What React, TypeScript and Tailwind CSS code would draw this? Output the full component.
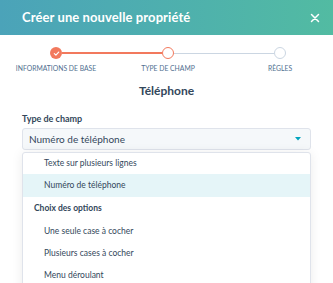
import React from "react";

const font = { fontFamily: "Lato, 'Noto Sans', sans-serif" };

type Step = {
  label: string;
  left: string;
  right: string;
  kind: "done" | "active" | "todo";
};

const steps: Step[] = [
  { label: "INFORMATIONS DE BASE", left: "bg-transparent", right: "bg-[#f2795d] h-[2px]", kind: "done" },
  { label: "TYPE DE CHAMP", left: "bg-[#f2795d] h-[2px]", right: "bg-[#cbd6e2] h-[1px]", kind: "active" },
  { label: "RÈGLES", left: "bg-[#cbd6e2] h-[1px]", right: "bg-transparent", kind: "todo" },
];

function Circle({ kind }: { kind: Step["kind"] }) {
  if (kind === "done")
    return (
      <div className="w-[12px] h-[12px] shrink-0 rounded-full bg-[#f2795d] flex items-center justify-center">
        <svg width="7" height="7" viewBox="0 0 8 8">
          <path d="M1.5 4.2 L3.3 5.8 L6.5 2.3" stroke="white" strokeWidth="1.3" fill="none" strokeLinecap="round" strokeLinejoin="round" />
        </svg>
      </div>
    );
  if (kind === "active")
    return <div className="w-[12px] h-[12px] shrink-0 rounded-full bg-white border-[1.5px] border-[#f2795d]" />;
  return <div className="w-[12px] h-[12px] shrink-0 rounded-full bg-white border border-[#cbd6e2]" />;
}

const items: { text: string; cls: string }[] = [
  { text: "Texte sur plusieurs lignes", cls: "h-[21px] pl-[21px]" },
  { text: "Numéro de téléphone", cls: "h-[23px] pl-[21px] bg-[#e5f5f8]" },
  { text: "Choix des options", cls: "h-[23px] pl-[11px] font-bold" },
  { text: "Une seule case à cocher", cls: "h-[22px] pl-[21px]" },
  { text: "Plusieurs cases à cocher", cls: "h-[22px] pl-[21px]" },
  { text: "Menu déroulant", cls: "h-[22px] pl-[21px]" },
];

export default function App() {
  return (
    <div className="w-[333px] h-[283px] overflow-hidden bg-white" style={font}>
      <div className="h-[35px] flex items-center justify-between pl-[22px] pr-[12px] bg-gradient-to-r from-[#4ba3b9] to-[#52bba2]">
        <span className="text-white font-bold text-[13px] tracking-[0.1px]">Créer une nouvelle propriété</span>
        <svg width="12" height="12" viewBox="0 0 12 12">
          <path d="M2.5 2.5 L9.5 9.5 M9.5 2.5 L2.5 9.5" stroke="white" strokeWidth="1.5" strokeLinecap="round" />
        </svg>
      </div>

      <div className="grid grid-cols-[112px_112px_112px] pt-[12px]">
        {steps.map((s) => (
          <div key={s.label} className="flex flex-col items-center">
            <div className="w-full flex items-center">
              <div className={`flex-1 ${s.left}`} />
              <Circle kind={s.kind} />
              <div className={`flex-1 ${s.right}`} />
            </div>
            <div className="mt-[5px] text-[6.8px] leading-[9px] text-[#516f90] whitespace-nowrap">{s.label}</div>
          </div>
        ))}
      </div>

      <div className="text-center text-[12px] leading-[16px] font-bold text-[#33475b] mt-[10px]">Téléphone</div>

      <div className="px-[22px] mt-[14px] flex flex-col">
        <div className="text-[9px] leading-[12px] font-bold text-[#33475b]">Type de champ</div>
        <div className="mt-[3px] h-[22px] border border-[#dfe3eb] bg-[#f5f8fa] rounded-[3px] flex items-center justify-between pl-[6px] pr-[9px]">
          <span className="text-[10px] text-[#33475b]">Numéro de téléphone</span>
          <svg width="6" height="4" viewBox="0 0 6 4">
            <path d="M0 0 H6 L3 3.5 Z" fill="#00a4bd" />
          </svg>
        </div>
        <div className="mt-[2px] border border-[#dfe3eb] bg-white rounded-t-[3px] shadow-[0_1px_12px_rgba(0,0,0,0.08)] h-[200px] flex flex-col">
          {items.map((it) => (
            <div key={it.text} className={`${it.cls} shrink-0 flex items-center text-[8.5px] text-[#33475b]`}>
              {it.text}
            </div>
          ))}
        </div>
      </div>
    </div>
  );
}
